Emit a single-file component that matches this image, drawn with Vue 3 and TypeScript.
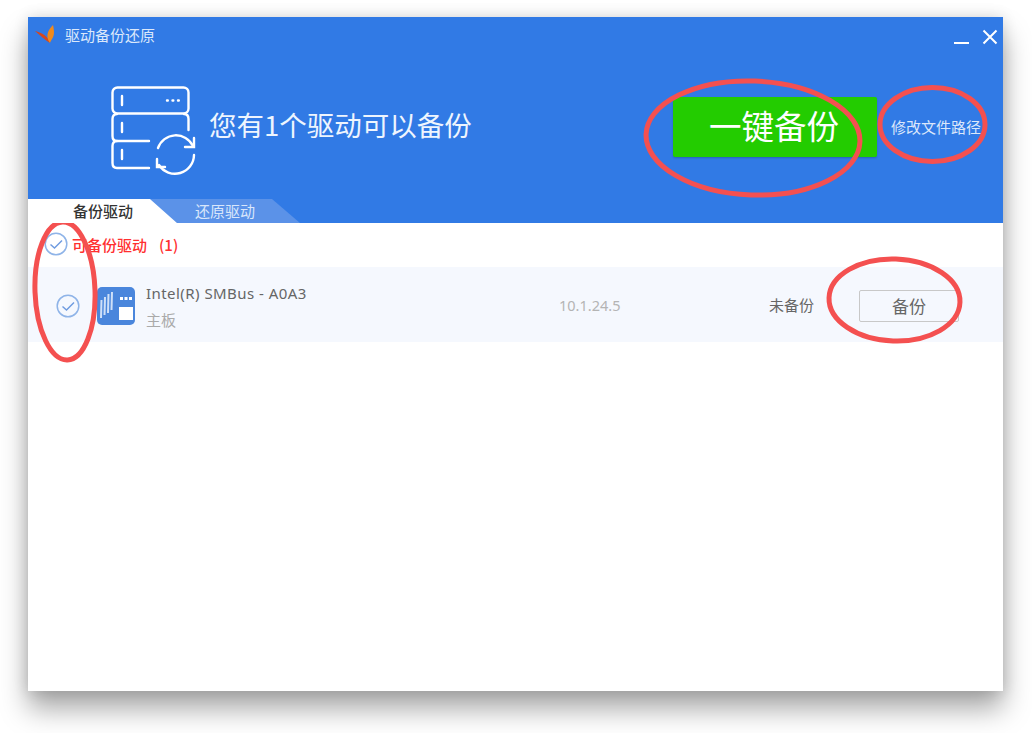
<script setup lang="ts">
const marks = [
  { cx: 753, cy: 138, rx: 107, ry: 57, r: 2 },
  { cx: 932.5, cy: 124.5, rx: 52.5, ry: 37, r: 0 },
  { cx: 65, cy: 291, rx: 30, ry: 69, r: -2 },
  { cx: 894.5, cy: 300, rx: 65.5, ry: 41, r: 2 },
];
</script>

<template>
  <div class="page">
    <div class="window">
      <header class="head">
        <div class="titlebar">
          <svg class="logo" width="22" height="20" viewBox="0 0 22 20">
            <path d="M0 6 C5 7 11 10 14 15 L15 18 C10 15 5 10 0 6Z" fill="#d8461c" />
            <path d="M15 18 C10 11 13 5 18 0 C19 5 20 10 17 14 C16 16 15 17 15 18Z" fill="#f08a1d" />
          </svg>
          <span class="title">驱动备份还原</span>
          <div class="winctl">
            <svg width="16" height="16" viewBox="0 0 16 16"><rect y="13" width="15" height="2" fill="#fff" /></svg>
            <svg width="16" height="16" viewBox="0 0 16 16"><path d="M1.5 1.5 L14.5 14.5 M14.5 1.5 L1.5 14.5" stroke="#fff" stroke-width="2" /></svg>
          </div>
        </div>
        <div class="hero">
          <svg class="server" width="86" height="90" viewBox="0 0 86 90" fill="none" stroke="#fff" stroke-width="2.4" stroke-linecap="round">
            <rect x="1.5" y="1.5" width="76" height="26" rx="5" />
            <path d="M11 10 V19" />
            <path d="M56 14.5h.8 M61.500 14.5h.8 M67 14.5h.8" />
            <path d="M6 28 C3 28 1.5 30 1.5 33 V50 C1.5 53 3 55 6 55 H38" />
            <path d="M73 28 C76 28 77.500 30 77.500 33 V44" />
            <path d="M11 37 V46" />
            <path d="M6 55 C3 55 1.500 57 1.500 60 V77 C1.500 80 3 82 6 82 H38" />
            <path d="M11 64 V73" />
            <path d="M47 62 A19 19 0 0 1 82 60" />
            <path d="M83 52 V61 H74" />
            <path d="M83 69 A19 19 0 0 1 48 79" />
            <path d="M46 73 V81 H54" />
          </svg>
          <div class="msg">您有1个驱动可以备份</div>
          <button class="oneclick">一键备份</button>
          <a class="pathlink">修改文件路径</a>
        </div>
        <nav class="tabs">
          <div class="tab active">备份驱动</div>
          <div class="tab other">还原驱动</div>
        </nav>
      </header>

      <div class="group">
        <svg class="check" width="24" height="24" viewBox="0 0 24 24" fill="none" stroke="#8fb4e8" stroke-width="1.500">
          <circle cx="12" cy="12" r="10.800" />
          <path d="M6.500 12.500 L10.500 16 L18 8.500" stroke="#6f9be0" />
        </svg>
        <span class="gname">可备份驱动</span>
        <span class="gcount">(1)</span>
      </div>

      <div class="row">
        <svg class="check rowcheck" width="24" height="24" viewBox="0 0 24 24" fill="none" stroke="#8fb4e8" stroke-width="1.500">
          <circle cx="12" cy="12" r="10.800" />
          <path d="M6.500 12.500 L10.500 16 L18 8.500" stroke="#6f9be0" />
        </svg>
        <svg class="chip" width="38" height="38" viewBox="0 0 38 38">
          <rect width="38" height="38" rx="5" fill="#4a86dc" />
          <path d="M4 31 L4.500 13 M7.500 28 L8 10 M11 26 L11.500 7 M14.500 23 L15 5" stroke="#cfe0f8" stroke-width="2" />
          <rect x="23" y="10" width="3" height="3" fill="#fff" />
          <rect x="27.500" y="10" width="3" height="3" fill="#fff" />
          <rect x="32" y="10" width="3" height="3" fill="#fff" />
          <rect x="22" y="20" width="14" height="13" fill="#fff" />
        </svg>
        <div class="dev">
          <div class="devname">Intel(R) SMBus - A0A3</div>
          <div class="devtype">主板</div>
        </div>
        <div class="ver">10.1.24.5</div>
        <div class="status">未备份</div>
        <button class="backup">备份</button>
      </div>
    </div>

    <svg class="marks" width="1032" height="733" viewBox="0 0 1032 733" fill="none" stroke="#f45050" stroke-width="5">
      <ellipse
        v-for="(m, i) in marks"
        :key="i"
        :cx="m.cx"
        :cy="m.cy"
        :rx="m.rx"
        :ry="m.ry"
        :transform="`rotate(${m.r} ${m.cx} ${m.cy})`"
      />
    </svg>
  </div>
</template>

<style>
html,
body {
  margin: 0;
  background: #fff;
}
</style>

<style scoped>
.page {
  position: relative;
  width: 1032px;
  height: 733px;
  padding: 17px 29px 42px 28px;
  box-sizing: border-box;
  overflow: hidden;
  background: #fff;
  font-family: "Noto Sans CJK SC", "Noto Sans", sans-serif;
}
.window {
  height: 674px;
  background: #fff;
  box-shadow: 0 18px 26px rgba(0, 0, 0, 0.34), 0 0 14px rgba(0, 0, 0, 0.14);
}
.head {
  height: 206px;
  background: #317ae5;
  display: flex;
  flex-direction: column;
}
.titlebar {
  height: 36px;
  display: flex;
  align-items: center;
  padding: 0 5px 0 7px;
  color: #dbe8fb;
}
.logo {
  margin-right: 8px;
}
.title {
  font-size: 15px;
  line-height: 36px;
}
.winctl {
  margin-left: auto;
  display: flex;
  gap: 12px;
  padding-top: 3px;
}
.hero {
  flex: 1;
  display: flex;
  align-items: flex-start;
  color: #fff;
}
.server {
  margin: 33px 0 0 83px;
}
.msg {
  margin: 50px 0 0 12px;
  font-size: 27.500px;
  line-height: 42px;
  color: #eef5fe;
  white-space: nowrap;
  width: 264px;
}
.oneclick {
  margin: 44px 0 0 200px;
  width: 204px;
  height: 60px;
  border: 0;
  border-radius: 2px;
  background: #23cc00;
  box-shadow: 0 1px 2px rgba(0, 0, 0, 0.2);
  color: #fff;
  font: 400 32.500px/56px "Noto Sans CJK SC", sans-serif;
  padding: 0 2px 4px 0;
}
.pathlink {
  margin: 60px 0 0 14px;
  font-size: 15px;
  line-height: 28px;
  color: #dbe7fb;
  white-space: nowrap;
}
.tabs {
  display: flex;
  height: 24px;
}
.tab {
  height: 24px;
  font-size: 15px;
  line-height: 24px;
}
.active {
  position: relative;
  z-index: 1;
  width: 149px;
  background: #fff;
  color: #333;
  font-weight: 500;
  clip-path: polygon(0 0, 122px 0, 100% 100%, 0 100%);
  padding-left: 45px;
  box-sizing: border-box;
}
.other {
  width: 150px;
  margin-left: -27px;
  background: #5b92e8;
  color: #d8e6fb;
  clip-path: polygon(0 0, 122px 0, 100% 100%, 27px 100%);
  padding-left: 45px;
  box-sizing: border-box;
}
.group {
  height: 44px;
  padding-bottom: 2px;
  box-sizing: border-box;
  display: flex;
  align-items: center;
  padding-left: 16px;
  font-size: 15px;
  font-weight: 500;
  color: #ff3030;
}
.gname {
  margin-left: 4px;
}
.gcount {
  margin-left: 12px;
}
.row {
  height: 75px;
  background: #f5f8fe;
  display: flex;
  align-items: center;
  font-size: 15px;
}
.rowcheck {
  margin-left: 28px;
  margin-top: 2px;
}
.chip {
  margin-left: 17px;
  margin-top: 2px;
  flex: none;
}
.dev {
  margin-left: 11px;
  width: 413px;
  padding-top: 4px;
}
.devname {
  font-family: "Noto Sans", "Noto Sans CJK SC", sans-serif;
  font-size: 15px;
  letter-spacing: 0.45px;
  line-height: 22px;
  color: #666;
  white-space: nowrap;
}
.devtype {
  margin-top: 5px;
  line-height: 22px;
  color: #aaa;
}
.ver {
  width: 210px;
  font-family: "Noto Sans", sans-serif;
  font-size: 14.500px;
  color: #b4b4b4;
}
.status {
  width: 90px;
  color: #666;
}
.backup {
  width: 100px;
  height: 32px;
  margin-top: 3px;
  background: transparent;
  border: 1px solid #c8c8c8;
  border-radius: 2px;
  color: #666;
  font: 400 17px/30px "Noto Sans CJK SC", sans-serif;
  padding: 0;
}
.marks {
  position: absolute;
  left: 0;
  top: 0;
  pointer-events: none;
}
</style>
